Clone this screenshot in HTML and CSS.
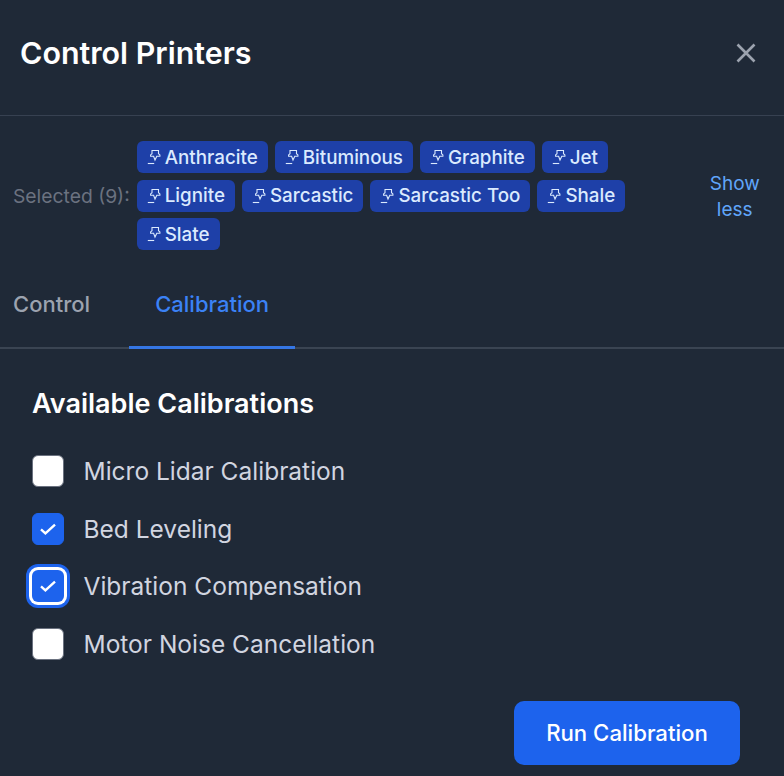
FILE: index.html
```html
<!DOCTYPE html>
<html lang="en">
<head>
<meta charset="utf-8">
<title>Control Printers</title>
<link rel="stylesheet" href="styles.css">
</head>
<body>
<svg class="defs" width="0" height="0" aria-hidden="true">
  <symbol id="pin" viewBox="0 0 14 16">
    <path d="M5 1.5h6.5v3.2l1.4 1.2v1.3H9.8L8 11 6.6 7.2H3.6V5.9L5 4.7z" fill="none" stroke="currentColor" stroke-width="1.1"/>
    <path d="M0.8 14.5h6.4" fill="none" stroke="currentColor" stroke-width="1.1"/>
  </symbol>
</svg>
<main class="modal">
  <header class="header">
    <h1 class="title">Control Printers</h1>
    <button class="close" aria-label="Close">
      <svg width="20" height="20" viewBox="0 0 20 20"><path d="M1.5 1.5l17 17M18.5 1.5l-17 17" stroke="currentColor" stroke-width="2.6" fill="none"/></svg>
    </button>
  </header>
  <section class="selected">
    <span class="selected-label">Selected (9):</span>
    <div class="chips">
      <span class="chip"><svg class="pin"><use href="#pin"/></svg>Anthracite</span>
      <span class="chip"><svg class="pin"><use href="#pin"/></svg>Bituminous</span>
      <span class="chip"><svg class="pin"><use href="#pin"/></svg>Graphite</span>
      <span class="chip"><svg class="pin"><use href="#pin"/></svg>Jet</span>
      <span class="chip"><svg class="pin"><use href="#pin"/></svg>Lignite</span>
      <span class="chip"><svg class="pin"><use href="#pin"/></svg>Sarcastic</span>
      <span class="chip"><svg class="pin"><use href="#pin"/></svg>Sarcastic Too</span>
      <span class="chip"><svg class="pin"><use href="#pin"/></svg>Shale</span>
      <span class="chip"><svg class="pin"><use href="#pin"/></svg>Slate</span>
    </div>
    <a class="toggle">Show less</a>
  </section>
  <nav class="tabs">
    <a class="tab">Control</a>
    <a class="tab active">Calibration</a>
  </nav>
  <section class="panel">
    <h2 class="panel-title">Available Calibrations</h2>
    <ul class="options">
      <li class="option"><span class="box"></span>Micro Lidar Calibration</li>
      <li class="option"><span class="box checked"><svg width="20" height="20" viewBox="0 0 20 20"><path d="M3 10.4l4.4 4L17 5.6" fill="none" stroke="#fff" stroke-width="2.4"/></svg></span>Bed Leveling</li>
      <li class="option"><span class="box checked focused"><svg width="20" height="20" viewBox="0 0 20 20"><path d="M3 10.4l4.4 4L17 5.6" fill="none" stroke="#fff" stroke-width="2.4"/></svg></span>Vibration Compensation</li>
      <li class="option"><span class="box"></span>Motor Noise Cancellation</li>
    </ul>
    <div class="actions"><button class="run">Run Calibration</button></div>
  </section>
</main>
</body>
</html>
```
FILE: styles.css
```css
* { box-sizing: border-box; }
html, body { margin: 0; height: 100%; }
body {
  background: #1f2937;
  font-family: Inter, "Liberation Sans", sans-serif;
  overflow: hidden;
}
.defs { position: absolute; }
.modal { width: 784px; height: 776px; display: flex; flex-direction: column; }
.header {
  height: 116px;
  padding: 0 28px 10px 20px;
  display: flex;
  align-items: center;
  justify-content: space-between;
  border-bottom: 1px solid #374151;
}
.title { margin: 0; font-size: 30.4px; line-height: 36px; font-weight: 600; color: #fff; }
.close { background: none; border: 0; padding: 0; color: #9ca3af; display: flex; }
.selected {
  height: 161px;
  padding: 25px 0 0 13px;
  display: flex;
  align-items: flex-start;
}
.selected-label { font-size: 19.3px; line-height: 24px; color: #6b7280; margin-top: 43px; margin-right: 7px; white-space: nowrap; }
.chips { width: 546px; display: flex; flex-wrap: wrap; gap: 6.5px 7px; align-content: flex-start; }
.chip {
  height: 32px;
  padding: 0 10px;
  display: inline-flex;
  align-items: center;
  gap: 4px;
  background: #1e40a8;
  color: #dbeafe;
  border-radius: 6px;
  font-size: 18.8px;
  font-weight: 500;
  white-space: nowrap;
}
.pin { width: 14px; height: 16px; flex: none; color: #dbeafe; }
.toggle {
  width: 60px;
  margin-left: 22px;
  margin-top: 30px;
  text-align: center;
  font-size: 19px;
  line-height: 26px;
  color: #60a5fa;
}
.tabs { height: 73px; display: flex; border-bottom: 2px solid #3a4452; padding-left: 13px; gap: 39px; margin-top: -1px; }
.tab { font-size: 22px; font-weight: 500; color: #9ca3af; line-height: 56px; }
.tab.active { color: #3b82f6; width: 166px; text-align: center; height: 73px; border-bottom: 3px solid #3576e4; }
.panel { padding: 37px 44px 0 32px; }
.panel-title { margin: 0 0 33px; font-size: 27px; line-height: 36px; font-weight: 600; color: #fff; }
.options { list-style: none; margin: 0; padding: 0; display: flex; flex-direction: column; gap: 25.6px; }
.option { display: flex; align-items: center; gap: 19.5px; height: 32px; font-size: 24.5px; color: #d1d5e0; }
.box {
  width: 32px;
  height: 32px;
  border-radius: 6px;
  background: #fff;
  border: 1px solid #6b7280;
  display: flex;
  align-items: center;
  justify-content: center;
  flex: none;
}
.box.checked { background: #1d63ed; border-color: #1d63ed; }
.box.focused { border: 0; box-shadow: 0 0 0 3px #fff, 0 0 0 6px #1d63ed; }
.actions { display: flex; justify-content: flex-end; margin-top: 41px; }
.run {
  width: 226px;
  height: 64px;
  border: 0;
  border-radius: 10px;
  background: #1d63ed;
  color: #fff;
  font: 500 22.2px Inter, "Liberation Sans", sans-serif;
}
```
